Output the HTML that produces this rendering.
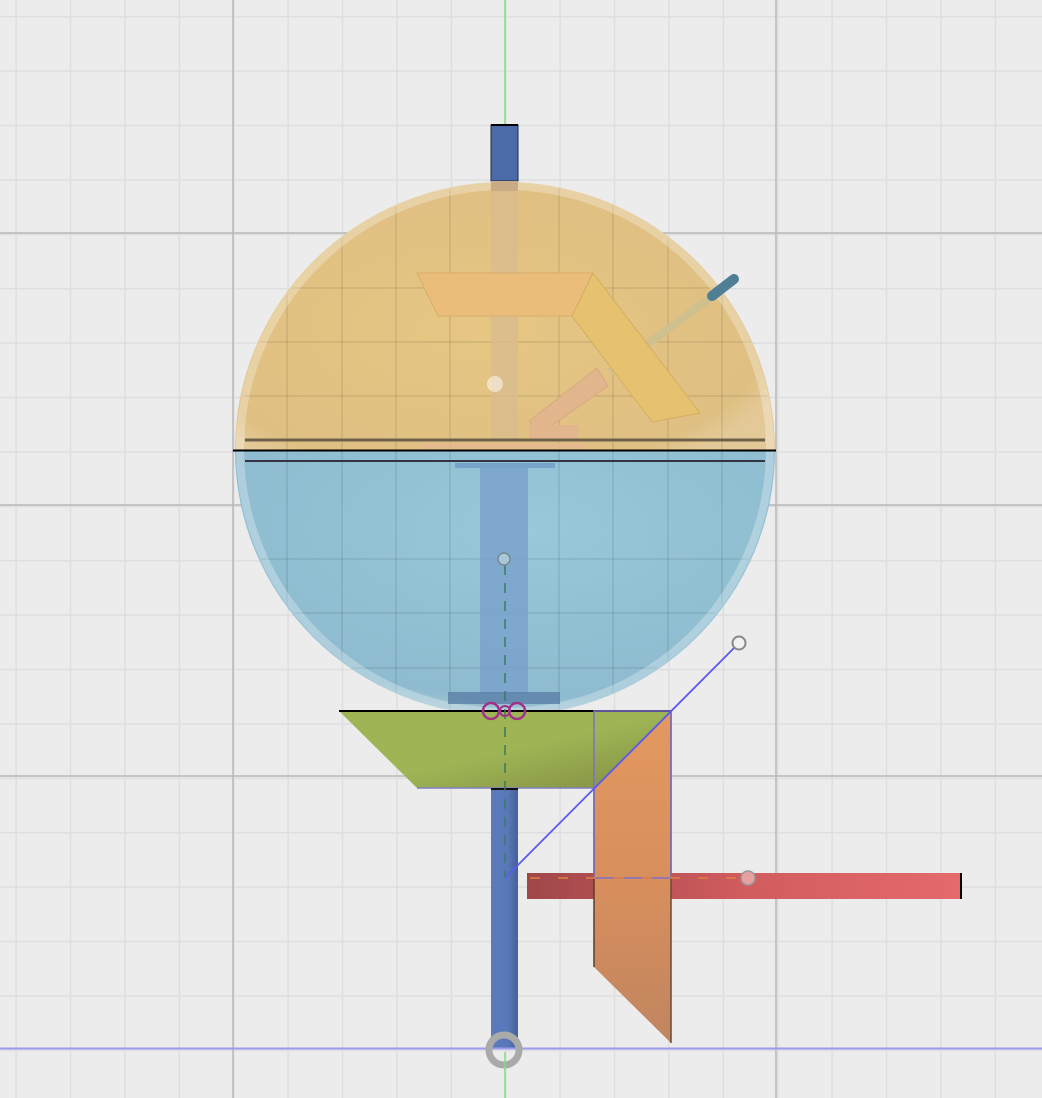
<!DOCTYPE html>
<html><head><meta charset="utf-8"><style>html,body{margin:0;padding:0;background:#ececec;overflow:hidden}svg{display:block}</style></head><body>
<svg width="1042" height="1098" viewBox="0 0 1042 1098" xmlns="http://www.w3.org/2000/svg">
<defs>
<pattern id="g" x="15.4" y="16" width="54.4" height="54.4" patternUnits="userSpaceOnUse">
<path d="M0.5 0V54.4M0 0.5H54.4" stroke="#dedede" stroke-width="2" fill="none"/>
</pattern>
<clipPath id="sp"><ellipse cx="505" cy="449" rx="268" ry="266"/></clipPath>
<radialGradient id="to" cx="0.45" cy="0.55" r="0.6">
<stop offset="0" stop-color="#e6c682"/><stop offset="0.9" stop-color="#dfc083"/><stop offset="1" stop-color="#e3c997"/>
</radialGradient>
<radialGradient id="bl" cx="0.55" cy="0.3" r="0.7">
<stop offset="0" stop-color="#98c8d9"/><stop offset="0.9" stop-color="#8ebbcf"/><stop offset="1" stop-color="#a5c6d3"/>
</radialGradient>
<linearGradient id="gr" x1="0" y1="0" x2="1" y2="1"><stop offset="0.5" stop-color="#9fb555"/><stop offset="0.85" stop-color="#8a9a48"/></linearGradient>
<linearGradient id="or" x1="0" y1="0" x2="0" y2="1"><stop offset="0" stop-color="#e39860"/><stop offset="0.5" stop-color="#d98f5c"/><stop offset="1" stop-color="#c08560"/></linearGradient>
<linearGradient id="rd" x1="0" y1="0" x2="1" y2="0"><stop offset="0" stop-color="#a0474a"/><stop offset="0.5" stop-color="#d15c5e"/><stop offset="1" stop-color="#e46a6c"/></linearGradient>
<linearGradient id="sh" x1="0" y1="0" x2="1" y2="0"><stop offset="0" stop-color="#5b7bbd"/><stop offset="0.6" stop-color="#5a78b8"/><stop offset="1" stop-color="#45609a"/></linearGradient>
</defs>
<rect width="1042" height="1098" fill="#ececec"/>
<rect width="1042" height="1098" fill="url(#g)"/>
<g stroke="#b8b8b8" stroke-width="1.5">
<line x1="233" y1="0" x2="233" y2="1098"/><line x1="776" y1="0" x2="776" y2="1098"/>
<line x1="0" y1="233" x2="1042" y2="233"/><line x1="0" y1="505" x2="1042" y2="505"/><line x1="0" y1="776" x2="1042" y2="776"/>
</g>
<line x1="505" y1="0" x2="505" y2="130" stroke="#7fe07f" stroke-width="1.5"/>
<rect x="491" y="125" width="27" height="56" fill="#4d6aa8" stroke="#1d2a45" stroke-width="1"/>
<line x1="491" y1="125" x2="518" y2="125" stroke="#000" stroke-width="2"/>
<path d="M235 450 A270 268 0 0 1 775 450 Z" fill="url(#to)"/>
<path d="M235 450 A270 266 0 0 0 775 450 Z" fill="url(#bl)"/>
<g clip-path="url(#sp)" stroke="#000" stroke-opacity="0.07" stroke-width="2">
<line x1="287" y1="180" x2="287" y2="720"/><line x1="342" y1="180" x2="342" y2="720"/><line x1="396" y1="180" x2="396" y2="720"/><line x1="450" y1="180" x2="450" y2="720"/><line x1="559" y1="180" x2="559" y2="720"/><line x1="613" y1="180" x2="613" y2="720"/><line x1="668" y1="180" x2="668" y2="720"/><line x1="722" y1="180" x2="722" y2="720"/>
<line x1="230" y1="288" x2="780" y2="288"/><line x1="230" y1="342" x2="780" y2="342"/><line x1="230" y1="396" x2="780" y2="396"/><line x1="230" y1="559" x2="780" y2="559"/><line x1="230" y1="613" x2="780" y2="613"/><line x1="230" y1="668" x2="780" y2="668"/>
</g>
<ellipse cx="505" cy="449" rx="265" ry="263" fill="none" stroke="#fff" stroke-opacity="0.28" stroke-width="8"/>
<rect x="491" y="190" width="27" height="250" fill="#d9bb8f" opacity="0.8"/>
<rect x="491" y="181" width="27" height="10" fill="#c9ab86"/>
<polygon points="417,273 593,273 572,316 438,316" fill="#ebbd7b" stroke="#d8ad6c"/>
<line x1="610" y1="372" x2="718" y2="292" stroke="#cfc08e" stroke-width="8"/>
<line x1="712" y1="296" x2="734" y2="279" stroke="#4f7f95" stroke-width="10" stroke-linecap="round"/>
<polygon points="593,273 700,413 652,422 572,316" fill="#e6c270" stroke="#d4ad60"/>
<polygon points="529,421 597,368 608,386 540,434" fill="#e2b68d" stroke="#d7a981"/>
<rect x="529" y="425" width="49" height="16" fill="#e2b68d"/>
<rect x="422" y="443" width="163" height="8" fill="#e4b98e" opacity="0.85"/>
<circle cx="495" cy="384" r="8" fill="#fff" opacity="0.5"/>
<line x1="245" y1="440" x2="765" y2="440" stroke="#6e6049" stroke-width="3"/>
<line x1="233" y1="450.5" x2="776" y2="450.5" stroke="#000" stroke-width="2"/>
<line x1="245" y1="461" x2="765" y2="461" stroke="#334" stroke-width="2"/>
<rect x="455" y="463" width="100" height="5" fill="#6f9bc7" opacity="0.8"/>
<rect x="480" y="468" width="48" height="226" fill="#7aa2cc" opacity="0.85"/>
<rect x="448" y="692" width="112" height="12" fill="#5a7fa8" opacity="0.8"/>
<polygon points="339,711 671,711 594,788 417,788" fill="url(#gr)"/>
<line x1="339" y1="711" x2="671" y2="711" stroke="#000" stroke-width="2"/>
<line x1="417" y1="788" x2="594" y2="788" stroke="#8080c0" stroke-width="1.5"/>
<rect x="491" y="789" width="27" height="259" fill="url(#sh)"/>
<line x1="491" y1="789" x2="518" y2="789" stroke="#111" stroke-width="2"/>
<rect x="527" y="873" width="434" height="26" fill="url(#rd)"/>
<line x1="961" y1="873" x2="961" y2="899" stroke="#000" stroke-width="2"/>
<polygon points="594,788 671,711 671,1043 594,967" fill="url(#or)"/>
<line x1="594" y1="788" x2="594" y2="967" stroke="#5a3a2a" stroke-width="1.5"/>
<line x1="671" y1="711" x2="671" y2="1043" stroke="#6a4a3a" stroke-width="1.5"/>
<rect x="594" y="711" width="77" height="167" fill="none" stroke="#7d70c8" stroke-width="1.5"/>
<line x1="530" y1="878" x2="740" y2="878" stroke="#e08040" stroke-width="1.5" stroke-dasharray="10 18"/>
<line x1="505" y1="565" x2="505" y2="878" stroke="#3a7a60" stroke-width="1.5" stroke-dasharray="10 8"/>
<line x1="505" y1="878" x2="735" y2="647" stroke="#5a5af0" stroke-width="1.8"/>
<circle cx="739" cy="643" r="6.5" fill="#f2f2f2" stroke="#888" stroke-width="2"/>
<circle cx="504" cy="559" r="6" fill="#a8c8d8" stroke="#7a8a95" stroke-width="1.5"/>
<circle cx="748" cy="878" r="7" fill="#e8a0a0" stroke="#999" stroke-width="1.5"/>
<circle cx="491" cy="711" r="8" fill="none" stroke="#a0308a" stroke-width="2.5"/>
<circle cx="517" cy="711" r="8" fill="none" stroke="#a0308a" stroke-width="2.5"/>
<circle cx="505" cy="711" r="5" fill="none" stroke="#a0308a" stroke-width="2"/>
<line x1="0" y1="1048.5" x2="1042" y2="1048.5" stroke="#9a9af0" stroke-width="2"/>
<circle cx="504" cy="1050" r="15" fill="none" stroke="#aaa" stroke-width="7"/>
<line x1="505" y1="1052" x2="505" y2="1098" stroke="#7fe07f" stroke-width="1.5"/>
</svg>
</body></html>
